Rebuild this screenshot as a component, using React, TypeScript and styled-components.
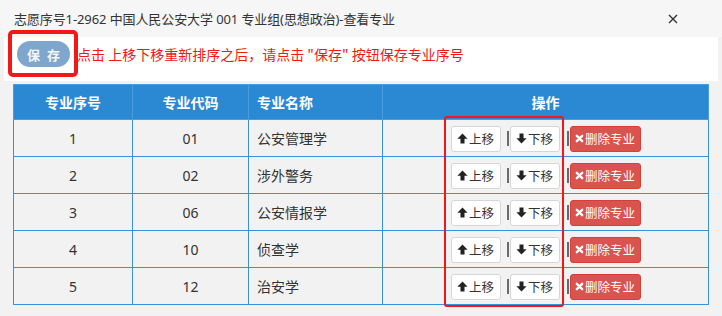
import React from "react";
import styled, { createGlobalStyle } from "styled-components";

const Global = createGlobalStyle`
  html, body { margin: 0; padding: 0; }
  body {
    background: #f2f2f2;
    font-family: "Noto Sans", "Noto Sans CJK SC", sans-serif;
    color: #333;
  }
`;

const Page = styled.div`
  width: 722px;
  height: 316px;
  background: #f2f2f2;
  overflow: hidden;
`;

const TitleBar = styled.div`
  height: 37px;
  display: flex;
  align-items: center;
  justify-content: space-between;
  padding: 0 44px 0 14px;
  background: #f6f6f6;
  font-size: 13px;
  color: #333;
  box-sizing: border-box;
`;

const Title = styled.span`
  white-space: nowrap;
  letter-spacing: -0.1px;
`;

const Close = styled.svg`
  width: 10px;
  height: 10px;
  margin-top: 1px;
`;

const Toolbar = styled.div`
  height: 44px;
  margin: 0 4px;
  padding: 4px 0 0 13px;
  background: #fff;
  display: flex;
  align-items: flex-start;
  box-sizing: border-box;
`;

const SaveMark = styled.div`
  position: relative;
  &::after {
    content: "";
    position: absolute;
    inset: -11px -8px -10px -9px;
    border: 4px solid #f21818;
    border-radius: 5px;
    pointer-events: none;
  }
`;

const SaveButton = styled.button`
  width: 53px;
  height: 26px;
  border: none;
  border-radius: 13px;
  background: #7fa6cd;
  color: #f4f7fb;
  font-family: "Noto Sans CJK SC", sans-serif;
  font-size: 13px;
  font-weight: bold;
  letter-spacing: 2px;
  padding: 0 0 0 2px;
  white-space: pre;
`;

const Hint = styled.span`
  margin-left: 7px;
  line-height: 26px;
  font-size: 14px;
  color: #f01818;
  font-family: "Noto Sans CJK SC", sans-serif;
  white-space: nowrap;
`;

const TableWrap = styled.div`
  position: relative;
  margin: 3px 0 0 13px;
  width: 695px;
`;

const Table = styled.table`
  width: 695px;
  border-collapse: collapse;
  table-layout: fixed;
  font-size: 14px;
`;

const Th = styled.th<{ $align?: string }>`
  height: 35px;
  padding: 0 8px;
  background: #2b88d3;
  color: #fff;
  font-family: "Noto Sans CJK SC", sans-serif;
  font-weight: bold;
  font-size: 14px;
  text-align: ${(p) => p.$align || "center"};
  border: 1px solid #4b9be0;
  box-sizing: border-box;
`;

const Td = styled.td<{ $align?: string }>`
  height: 37px;
  padding: 0 8px;
  background: #f2f2f3;
  color: #333;
  font-family: "Noto Sans", "Noto Sans CJK SC", sans-serif;
  text-align: ${(p) => p.$align || "center"};
  border: 1px solid #3a91d8;
  box-sizing: border-box;
`;

const Ops = styled.div`
  display: flex;
  justify-content: center;
  align-items: center;
  padding-top: 1px;
`;

const MoveButton = styled.button`
  height: 26px;
  width: 50px;
  display: inline-flex;
  align-items: center;
  justify-content: center;
  gap: 1px;
  background: #fff;
  border: 1px solid #d6d6d6;
  border-radius: 3px;
  color: #333;
  font-family: "Noto Sans CJK SC", sans-serif;
  font-size: 12.5px;
  padding: 0;
`;

const Sep = styled.span<{ $before: number }>`
  width: 2px;
  height: 15px;
  background: #6a6a6a;
  margin: 0 1px 0 ${(p) => p.$before}px;
`;

const DeleteButton = styled.button`
  height: 26px;
  width: 71px;
  display: inline-flex;
  align-items: center;
  justify-content: center;
  gap: 1px;
  background: #d9534f;
  border: 1px solid #d43f3a;
  border-radius: 3px;
  color: #fff;
  font-family: "Noto Sans CJK SC", sans-serif;
  font-size: 12.5px;
  padding: 0;
`;

const ColumnMark = styled.div`
  position: absolute;
  left: 431px;
  top: 32px;
  width: 120px;
  height: 191px;
  border: 2px solid #f01818;
  border-radius: 3px;
  box-sizing: border-box;
  pointer-events: none;
`;

const Arrow = ({ down }: { down?: boolean }) => (
  <svg width="11" height="11" viewBox="0 0 12 12" style={down ? { transform: "rotate(180deg)" } : undefined}>
    <path d="M6 0.6 L11.6 6.4 L8.2 6.4 L8.2 11.4 L3.8 11.4 L3.8 6.4 L0.4 6.4 Z" fill="#222" />
  </svg>
);

const Cross = () => (
  <svg width="9" height="9" viewBox="0 0 10 10">
    <path d="M2 2 L8 8 M8 2 L2 8" stroke="#fff" strokeWidth="2.6" strokeLinecap="round" />
  </svg>
);

const rows = [
  { seq: 1, code: "01", name: "公安管理学" },
  { seq: 2, code: "02", name: "涉外警务" },
  { seq: 3, code: "06", name: "公安情报学" },
  { seq: 4, code: "10", name: "侦查学" },
  { seq: 5, code: "12", name: "治安学" },
];

export default function App() {
  return (
    <Page>
      <Global />
      <TitleBar>
        <Title>志愿序号1-2962 中国人民公安大学 001 专业组(思想政治)-查看专业</Title>
        <Close viewBox="0 0 10 10">
          <path d="M1 1 L9 9 M9 1 L1 9" stroke="#333" strokeWidth="1.4" />
        </Close>
      </TitleBar>
      <Toolbar>
        <SaveMark>
          <SaveButton>保 存</SaveButton>
        </SaveMark>
        <Hint>点击 上移下移重新排序之后，请点击 "保存" 按钮保存专业序号</Hint>
      </Toolbar>
      <TableWrap>
        <Table>
          <colgroup>
            <col style={{ width: 119 }} />
            <col style={{ width: 116 }} />
            <col style={{ width: 134 }} />
            <col style={{ width: 326 }} />
          </colgroup>
          <thead>
            <tr>
              <Th>专业序号</Th>
              <Th>专业代码</Th>
              <Th $align="left">专业名称</Th>
              <Th>操作</Th>
            </tr>
          </thead>
          <tbody>
            {rows.map((r) => (
              <tr key={r.seq}>
                <Td>{r.seq}</Td>
                <Td>{r.code}</Td>
                <Td $align="left">{r.name}</Td>
                <Td>
                  <Ops>
                    <MoveButton>
                      <Arrow />
                      上移
                    </MoveButton>
                    <Sep $before={6} />
                    <MoveButton>
                      <Arrow down />
                      下移
                    </MoveButton>
                    <Sep $before={7} />
                    <DeleteButton>
                      <Cross />
                      删除专业
                    </DeleteButton>
                  </Ops>
                </Td>
              </tr>
            ))}
          </tbody>
        </Table>
        <ColumnMark />
      </TableWrap>
    </Page>
  );
}
